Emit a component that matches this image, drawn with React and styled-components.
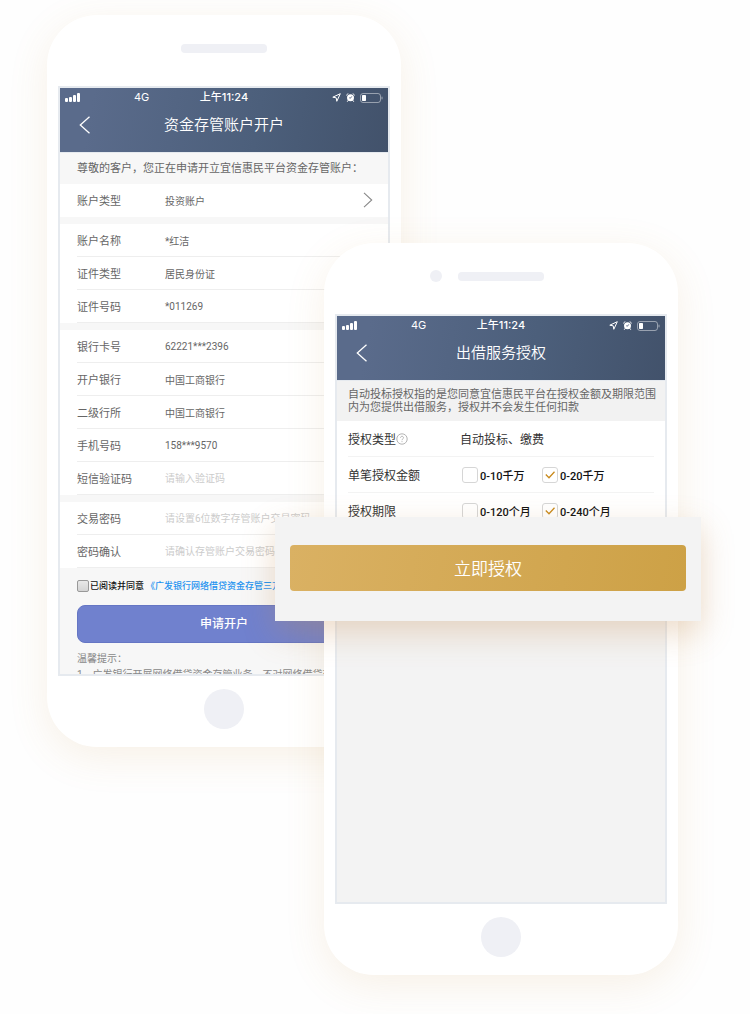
import React from "react";
import styled, { createGlobalStyle } from "styled-components";

const sans = `Roboto, "Noto Sans CJK SC", sans-serif`;

const GlobalStyle = createGlobalStyle`
  *, *::before, *::after { box-sizing: border-box; }
  body {
    margin: 0;
    background: #fefefe;
    font-family: ${sans};
    color: #666;
  }
  button, input { font-family: inherit; }
`;

const Page = styled.main`
  padding: 15px 49px 39px 47px;
`;

/* Overlapping grid areas let the two handsets and the callout share one canvas. */
const Stage = styled.div`
  display: grid;
  grid-template-columns: 228fr 49fr 77fr 277fr 23fr;
  grid-template-rows: 228px 274px 104px 126px 228px;
`;

const Phone = styled.section`
  grid-area: ${(p) => (p.$front ? "2 / 3 / 6 / 5" : "1 / 1 / 5 / 4")};
  display: flex;
  flex-direction: column;
  min-width: 0;
  min-height: 0;
  padding: 0 11px 18px;
  border-radius: 50px;
  background: #fff;
  box-shadow: 0 10px 40px rgba(200, 140, 60, 0.12);
`;

const Earpiece = styled.div`
  flex: none;
  display: grid;
  grid-template-columns: 1fr auto 1fr;
  align-items: center;
  column-gap: 16px;
  height: 71px;
  padding-bottom: 5px;
`;

const Camera = styled.span`
  justify-self: end;
  width: 12px;
  height: 12px;
  border-radius: 50%;
  background: #eff0f5;
`;

const Speaker = styled.span`
  grid-column: 2;
  width: 86px;
  height: 9px;
  border-radius: 4px;
  background: #eff0f5;
`;

const HomeKey = styled.div`
  flex: none;
  align-self: center;
  width: 40px;
  height: 40px;
  margin-top: 13px;
  border-radius: 50%;
  background: #eff0f5;
`;

const Screen = styled.div`
  flex: 1;
  min-height: 0;
  overflow: hidden;
  border: 2px solid #e6eaef;
  background: ${(p) => p.$bg};
`;

const Header = styled.header`
  height: 65px;
  border-bottom: 1px solid #e6eaef;
  background: linear-gradient(100deg, #5a6b8b 10%, #4c5f7b 60%, #42526b);
  color: #fff;
`;

const StatusBar = styled.div`
  display: grid;
  grid-template-columns: 1fr auto 1fr;
  align-items: center;
  height: 19px;
  padding: 0 5px;
  font: 500 11px/19px Inter, "Noto Sans CJK SC", sans-serif;
`;

const Carrier = styled.span`
  display: flex;
  align-items: center;
  gap: 54px;
  font-weight: 400;
`;

const Indicators = styled.span`
  display: flex;
  align-items: center;
  justify-content: flex-end;
  gap: 5px;
`;

const NavBar = styled.div`
  display: grid;
  grid-template-columns: 50px 1fr 50px;
  align-items: center;
  height: 36px;
`;

const IconButton = styled.button`
  display: flex;
  align-items: center;
  justify-content: center;
  padding: 0;
  border: 0;
  background: none;
  color: inherit;
`;

const Title = styled.h1`
  margin: 0;
  font-size: 15px;
  line-height: 24px;
  font-weight: 350;
  text-align: center;
  white-space: nowrap;
`;

const Greeting = styled.p`
  margin: 0;
  padding: 0 17px;
  background: #f7f7f7;
  font-size: 11px;
  line-height: 31px;
  white-space: nowrap;
`;

const Group = styled.div`
  padding-left: 17px;
  border-bottom: ${(p) => (p.$last ? "0" : "7px solid #f7f7f7")};
  background: #fff;
`;

const Row = styled.div`
  display: grid;
  grid-template-columns: 88px 1fr auto;
  align-items: center;
  height: 33px;
  padding-right: 15px;
  border-bottom: 1px solid ${(p) => (p.$plain ? "#fff" : "#eee")};
  font-size: 10px;
  white-space: nowrap;
`;

const RowLabel = styled.label`
  font-size: 11px;
`;

const TextInput = styled.input`
  min-width: 0;
  width: 100%;
  padding: 0;
  border: 0;
  outline: 0;
  background: none;
  color: #666;
  font-size: 10px;
  &::placeholder { color: #ccc; opacity: 1; }
`;

const FormFoot = styled.div`
  padding: 10px 17px 0;
`;

const Consent = styled.div`
  display: flex;
  align-items: center;
  height: 16px;
  color: #111;
  font-size: 9px;
  font-weight: 500;
  line-height: 14px;
  white-space: nowrap;
`;

const ConsentBox = styled.input`
  flex: none;
  appearance: none;
  width: 12px;
  height: 12px;
  margin: 0 1px 0 0;
  border: 1px solid #999;
  border-radius: 2px;
  background: linear-gradient(#e8e8e8, #d4d4d4);
`;

const Agreement = styled.a`
  margin-left: 2px;
  color: #1e93f0;
  text-decoration: none;
`;

const OpenButton = styled.button`
  display: block;
  width: 100%;
  height: 38px;
  margin: 11px 0 8px;
  padding: 0 0 3px;
  border: 1px solid #6576c4;
  border-radius: 8px;
  background: #7081ce;
  color: #fff;
  font-size: 12px;
  font-weight: 500;
`;

const Tips = styled.div`
  color: #888;
  font-size: 10px;
  line-height: 16px;
  white-space: nowrap;
`;

const Notice = styled.p`
  margin: 0;
  padding: 7px 6px 7px 11px;
  background: #f2f2f2;
  font-size: 11px;
  line-height: 13px;
`;

const Options = styled.div`
  padding: 0 11px;
  background: #fff;
  color: #333;
`;

const OptionRow = styled.div`
  display: grid;
  grid-template-columns: 112px 1fr;
  align-items: center;
  height: 36px;
  border-bottom: 1px solid #f3f3f3;
  font-size: 12px;
  white-space: nowrap;
`;

const OptionName = styled.span`
  display: flex;
  align-items: center;
`;

const Choices = styled.div`
  display: grid;
  grid-template-columns: 80px 1fr;
  padding-left: 2px;
`;

const Choice = styled.label`
  display: flex;
  align-items: center;
  gap: 2px;
  color: #111;
  font-size: 11px;
  font-weight: 500;
`;

const tick = encodeURIComponent(
  `<svg xmlns="http://www.w3.org/2000/svg" viewBox="0 0 16 16"><path d="M3.8 7.5 7 10.7 12.5 4.8" fill="none" stroke="#c98a1c" stroke-width="1.3"/></svg>`
);

const ChoiceBox = styled.input`
  flex: none;
  appearance: none;
  width: 16px;
  height: 16px;
  margin: 0;
  border: 1px solid #d6d6d6;
  border-radius: 3px;
  background: #fff;
  &:checked { background: #fff url("data:image/svg+xml,${tick}") center / 16px no-repeat; }
`;

const Callout = styled.div`
  grid-area: 3 / 2 / 4 / 6;
  z-index: 1;
  padding: 28px 15px 30px;
  background: #f3f3f3;
  box-shadow: 0 12px 30px rgba(195, 140, 80, 0.3);
`;

const AuthorizeButton = styled.button`
  display: block;
  width: 100%;
  height: 46px;
  padding: 0 0 2px;
  border: 0;
  border-radius: 4px;
  background: linear-gradient(100deg, #dab163, #cda146);
  color: #fff;
  font-size: 17px;
  font-weight: 350;
`;

const Signal = () => (
  <svg width="15" height="9" viewBox="0 0 15 9" fill="#fff" aria-hidden="true">
    <rect x="0" y="5" width="3" height="4" rx="1" />
    <rect x="4" y="4" width="3" height="5" rx="1" />
    <rect x="8" y="2" width="3" height="7" rx="1" />
    <rect x="12" y="0" width="3" height="9" rx="1" />
  </svg>
);

const Location = () => (
  <svg width="9" height="9" viewBox="0 0 9 9" fill="none" stroke="#fff" strokeLinejoin="round" aria-hidden="true">
    <path d="M8.3.7.8 4.2l3.4.6.6 3.5z" />
  </svg>
);

const Alarm = () => (
  <svg width="9" height="9" viewBox="0 0 9 9" aria-hidden="true">
    <circle cx="4.5" cy="4.8" r="3.5" fill="#fff" />
    <path d="M.5 2.1 2.1.6M8.5 2.1 6.9.6M2 7.6 1.4 8.5M7 7.6 7.6 8.5" stroke="#fff" strokeWidth=".9" strokeLinecap="round" />
    <path d="M4.3 5.3 5.8 3.4M4.4 5.2 3.3 4.7" stroke="#50617f" strokeWidth=".9" />
  </svg>
);

const Battery = () => (
  <svg width="23" height="10" viewBox="0 0 23 10" fill="none" aria-hidden="true">
    <rect x=".5" y=".5" width="20" height="9" rx="2.5" stroke="#fff" strokeOpacity=".45" />
    <rect x="2" y="2" width="4" height="6" rx=".7" fill="#fff" />
    <path d="M22 3.7v2.6" stroke="#fff" strokeOpacity=".5" />
  </svg>
);

const Back = () => (
  <svg width="12" height="18" viewBox="0 0 12 18" fill="none" stroke="#fff" strokeWidth="1.3" aria-hidden="true">
    <path d="M10.5.8 1.3 9l9.2 8.2" />
  </svg>
);

const Forward = () => (
  <svg width="10" height="16" viewBox="0 0 10 16" fill="none" stroke="#888" strokeWidth="1.1" aria-hidden="true">
    <path d="M1 .8 8.7 8 1 15.2" />
  </svg>
);

const Help = () => (
  <svg width="12" height="12" viewBox="0 0 12 12" fill="none" stroke="#aaa" strokeWidth=".9" aria-hidden="true">
    <circle cx="6" cy="6" r="5.2" />
    <path d="M4.5 4.8c0-2 3-2 3 0 0 1.1-1.5 1.1-1.5 2.4M6 8.2v.9" />
  </svg>
);

function ScreenHeader({ title }) {
  return (
    <Header>
      <StatusBar>
        <Carrier><Signal />4G</Carrier>
        <span>上午11:24</span>
        <Indicators><Location /><Alarm /><Battery /></Indicators>
      </StatusBar>
      <NavBar>
        <IconButton type="button" aria-label="返回"><Back /></IconButton>
        <Title>{title}</Title>
      </NavBar>
    </Header>
  );
}

const identity = [
  ["账户名称", "*红洁"],
  ["证件类型", "居民身份证"],
  ["证件号码", "*011269"],
];

const bank = [
  ["银行卡号", "62221***2396"],
  ["开户银行", "中国工商银行"],
  ["二级行所", "中国工商银行"],
  ["手机号码", "158***9570"],
];

const limits = [
  ["单笔授权金额", "0-10千万", "0-20千万"],
  ["授权期限", "0-120个月", "0-240个月"],
];

const InfoRow = ({ label, value }) => (
  <Row>
    <RowLabel as="span">{label}</RowLabel>
    <span>{value}</span>
  </Row>
);

const InputRow = ({ id, label, type = "text", placeholder }) => (
  <Row>
    <RowLabel htmlFor={id}>{label}</RowLabel>
    <TextInput id={id} type={type} placeholder={placeholder} />
  </Row>
);

export default function App() {
  return (
    <Page lang="zh-CN">
      <GlobalStyle />
      <Stage>
        <Phone>
          <Earpiece><Speaker /></Earpiece>
          <Screen $bg="#f7f7f7">
            <ScreenHeader title="资金存管账户开户" />
            <Greeting>尊敬的客户，您正在申请开立宜信惠民平台资金存管账户：</Greeting>
            <Group>
              <Row $plain>
                <RowLabel as="span">账户类型</RowLabel>
                <span>投资账户</span>
                <IconButton type="button" aria-label="选择账户类型"><Forward /></IconButton>
              </Row>
            </Group>
            <Group>
              {identity.map(([label, value]) => <InfoRow key={label} label={label} value={value} />)}
            </Group>
            <Group>
              {bank.map(([label, value]) => <InfoRow key={label} label={label} value={value} />)}
              <InputRow id="sms" label="短信验证码" placeholder="请输入验证码" />
            </Group>
            <Group $last>
              <InputRow id="pin" type="password" label="交易密码" placeholder="请设置6位数字存管账户交易密码" />
              <InputRow id="pin2" type="password" label="密码确认" placeholder="请确认存管账户交易密码" />
            </Group>
            <FormFoot>
              <Consent>
                <ConsentBox id="consent" type="checkbox" />
                <label htmlFor="consent">已阅读并同意</label>
                <Agreement href="#agreement">《广发银行网络借贷资金存管三方协议》</Agreement>
              </Consent>
              <OpenButton type="button">申请开户</OpenButton>
              <Tips>
                <div>温馨提示：</div>
                <div>1、广发银行开展网络借贷资金存管业务，不对网络借贷交易</div>
              </Tips>
            </FormFoot>
          </Screen>
          <HomeKey />
        </Phone>

        <Phone $front>
          <Earpiece><Camera /><Speaker /></Earpiece>
          <Screen $bg="#f3f3f3">
            <ScreenHeader title="出借服务授权" />
            <Notice>
              自动投标授权指的是您同意宜信惠民平台在授权金额及期限范围内为您提供出借服务，授权并不会发生任何扣款
            </Notice>
            <Options>
              <OptionRow>
                <OptionName>授权类型<Help /></OptionName>
                <span>自动投标、缴费</span>
              </OptionRow>
              {limits.map(([name, low, high]) => (
                <OptionRow key={name}>
                  <OptionName>{name}</OptionName>
                  <Choices>
                    <Choice><ChoiceBox type="checkbox" />{low}</Choice>
                    <Choice><ChoiceBox type="checkbox" defaultChecked />{high}</Choice>
                  </Choices>
                </OptionRow>
              ))}
            </Options>
          </Screen>
          <HomeKey />
        </Phone>

        <Callout>
          <AuthorizeButton type="button">立即授权</AuthorizeButton>
        </Callout>
      </Stage>
    </Page>
  );
}
